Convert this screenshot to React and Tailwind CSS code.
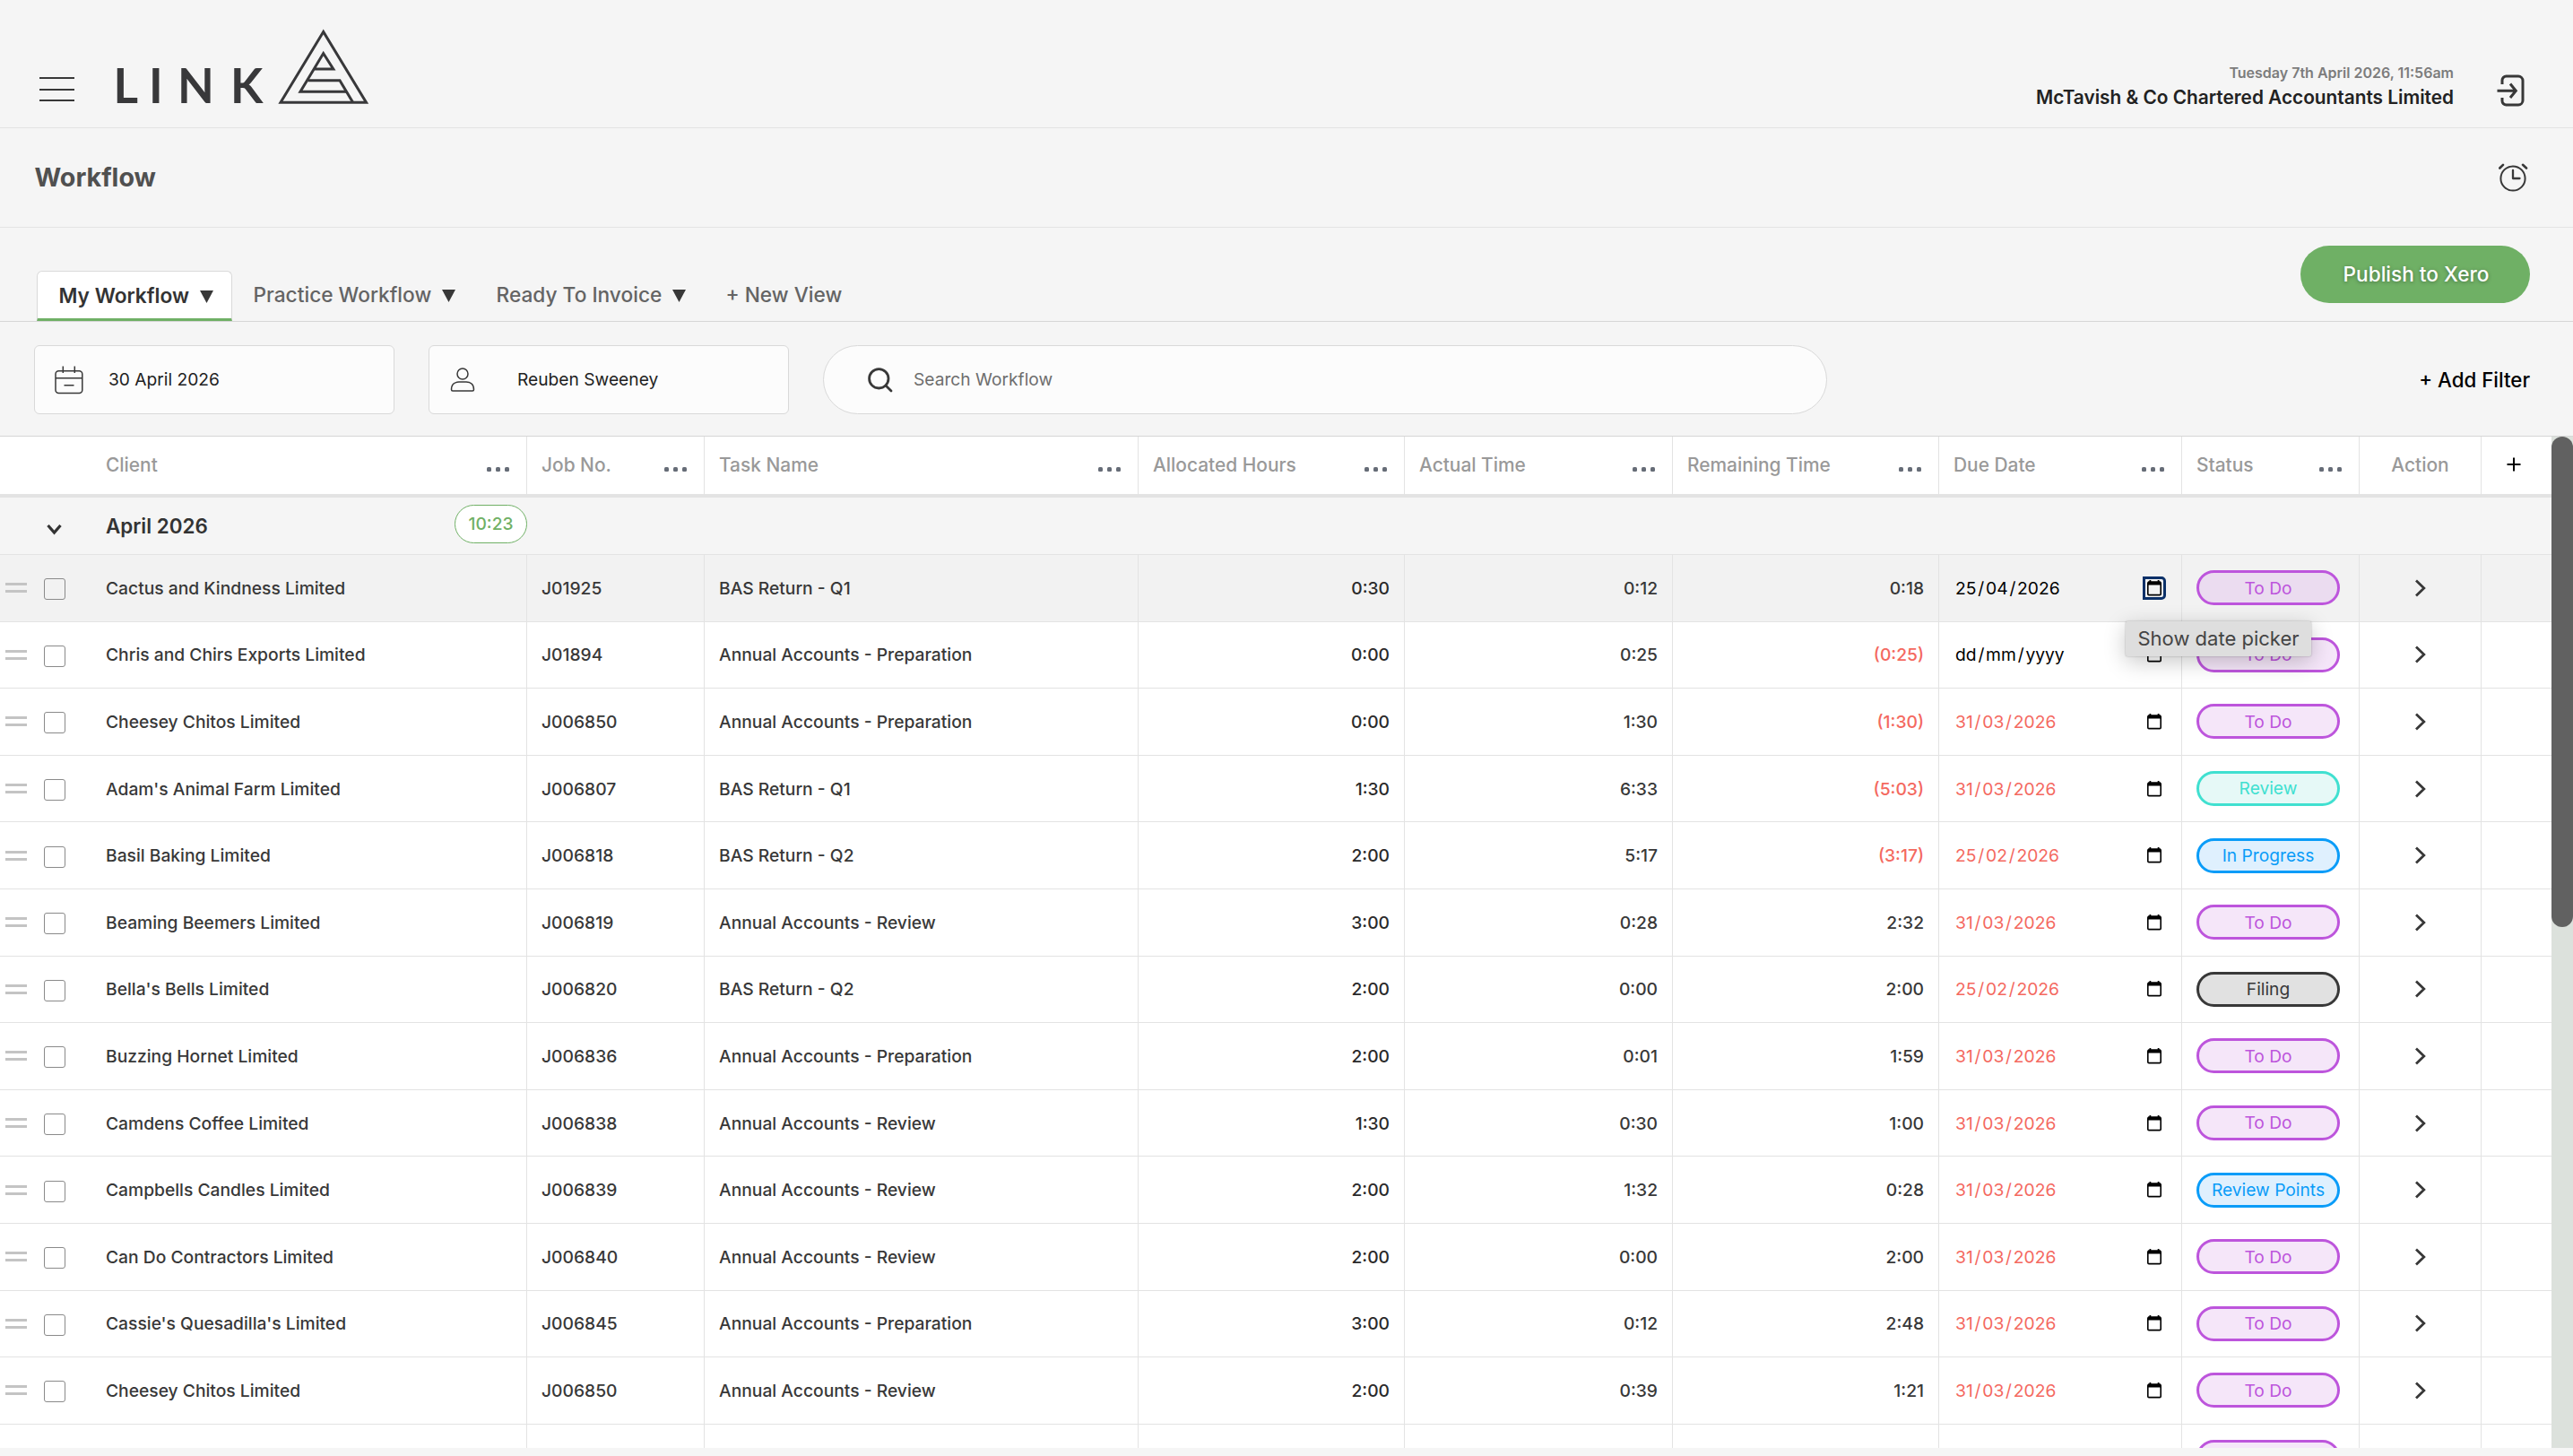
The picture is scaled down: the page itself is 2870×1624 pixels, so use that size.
import React from "react";

const GRID =
  "grid grid-cols-[588px_198px_484px_297px_299px_297px_271px_198px_136px_78px]";

const ROWS = [
  ["Cactus and Kindness Limited", "J01925", "BAS Return - Q1", "0:30", "0:12", "0:18", "25/04/2026", "To Do"],
  ["Chris and Chirs Exports Limited", "J01894", "Annual Accounts - Preparation", "0:00", "0:25", "(0:25)", "dd/mm/yyyy", "To Do"],
  ["Cheesey Chitos Limited", "J006850", "Annual Accounts - Preparation", "0:00", "1:30", "(1:30)", "31/03/2026", "To Do"],
  ["Adam's Animal Farm Limited", "J006807", "BAS Return - Q1", "1:30", "6:33", "(5:03)", "31/03/2026", "Review"],
  ["Basil Baking Limited", "J006818", "BAS Return - Q2", "2:00", "5:17", "(3:17)", "25/02/2026", "In Progress"],
  ["Beaming Beemers Limited", "J006819", "Annual Accounts - Review", "3:00", "0:28", "2:32", "31/03/2026", "To Do"],
  ["Bella's Bells Limited", "J006820", "BAS Return - Q2", "2:00", "0:00", "2:00", "25/02/2026", "Filing"],
  ["Buzzing Hornet Limited", "J006836", "Annual Accounts - Preparation", "2:00", "0:01", "1:59", "31/03/2026", "To Do"],
  ["Camdens Coffee Limited", "J006838", "Annual Accounts - Review", "1:30", "0:30", "1:00", "31/03/2026", "To Do"],
  ["Campbells Candles Limited", "J006839", "Annual Accounts - Review", "2:00", "1:32", "0:28", "31/03/2026", "Review Points"],
  ["Can Do Contractors Limited", "J006840", "Annual Accounts - Review", "2:00", "0:00", "2:00", "31/03/2026", "To Do"],
  ["Cassie's Quesadilla's Limited", "J006845", "Annual Accounts - Preparation", "3:00", "0:12", "2:48", "31/03/2026", "To Do"],
  ["Cheesey Chitos Limited", "J006850", "Annual Accounts - Review", "2:00", "0:39", "1:21", "31/03/2026", "To Do"],
];

const STATUS = {
  "To Do": "border-[#bd55dc] bg-[#f5e6f9] text-[#bd55dc]",
  Review: "border-[#40e0d0] bg-[#e6f9f7] text-[#40e0d0]",
  "In Progress": "border-[#0a9cf8] bg-[#dff0fe] text-[#0a9cf8]",
  "Review Points": "border-[#0a9cf8] bg-[#dff0fe] text-[#0a9cf8]",
  Filing: "border-[#383838] bg-[#e1e1e1] text-[#383838]",
};

function Logo() {
  return (
    <svg className="h-[100px] w-[300px]" viewBox="-10 0 300 100" fill="none">
      <text
        x="-1.5 38 70 129"
        y="85.3"
        fill="#38383a"
        fontFamily="Lato"
        fontWeight="700"
        fontSize="53"
      >
        LINK
      </text>
      <g stroke="#38383a" strokeWidth="3" strokeMiterlimit="10" transform="translate(-128 -30)">
        <path d="M360.7 35.5 L313 114.3 H408.5 Z" />
        <path d="M350.5 77 H371.8 L360.7 59.5 L335 102.2 H386" />
        <path d="M343.5 89.8 H379 L393.5 114" />
      </g>
    </svg>
  );
}

function LogoutIcon() {
  return (
    <svg className="h-[36px] w-[32px]" viewBox="0 0 32 36" fill="none" stroke="#383838" strokeWidth="3">
      <path d="M6 11 V6.5 A4.5 4.5 0 0 1 10.5 2 H24 A5 5 0 0 1 29 7 V29 A5 5 0 0 1 24 34 H10.5 A4.5 4.5 0 0 1 6 29.5 V26" />
      <path d="M0.5 18.3 H22 M15 10.5 L21.3 18.3 L15 26" />
    </svg>
  );
}

function AlarmIcon() {
  return (
    <svg className="h-[33px] w-[34px]" viewBox="0 0 34 33" fill="none" stroke="#383838" strokeLinecap="round">
      <circle cx="17" cy="17" r="13.6" strokeWidth="2" />
      <path d="M17 8 V17 H24.5" strokeWidth="2.3" strokeLinejoin="round" />
      <path d="M2.3 5.5 L6 1.8 M28 1.8 L32 5.5" strokeWidth="2.6" />
    </svg>
  );
}

function CalendarIcon() {
  return (
    <svg className="h-[32px] w-[32px]" viewBox="0 0 32 32" fill="none" stroke="#383838" strokeWidth="1.5">
      <rect x="1" y="5.8" width="29.8" height="24.8" rx="3.5" />
      <path d="M1 13.7 H30.8 M9.3 0.5 V8 M22.3 0.5 V8 M10.5 21.7 H21.5" />
    </svg>
  );
}

function PersonIcon() {
  return (
    <svg className="h-[28px] w-[28px]" viewBox="0 0 28 28" fill="none" stroke="#383838" strokeWidth="1.5">
      <circle cx="14" cy="7" r="6" />
      <path d="M1.5 24.5 C1.5 18 6 16 10 16 H18 C22 16 26.5 18 26.5 24.5 C26.5 25.5 26 26 25 26 H3 C2 26 1.5 25.5 1.5 24.5 Z" />
    </svg>
  );
}

function SearchIcon() {
  return (
    <svg className="h-[28px] w-[28px]" viewBox="0 0 28 28" fill="none" stroke="#383838" strokeWidth="2.8" strokeLinecap="round">
      <circle cx="12.3" cy="12.3" r="10.7" />
      <path d="M20 20 L26 26" />
    </svg>
  );
}

function DateIcon() {
  return (
    <svg className="h-[18px] w-[16px]" viewBox="0 0 16 18">
      <rect x="0.8" y="2.2" width="14.4" height="14.4" rx="1.2" fill="none" stroke="#000" strokeWidth="1.6" />
      <path d="M1 1.6 H15 V5.6 H1 Z M2.5 0 H4.3 V3 H2.500 Z M11.700 0 H13.500 V3 H11.700 Z" fill="#000" />
    </svg>
  );
}

function Dots() {
  return (
    <span className="mt-[8px] mr-[19.5px] flex gap-[5px]">
      <i className="h-[5px] w-[5px] rounded-[1.5px] bg-[#666c77]" />
      <i className="h-[5px] w-[5px] rounded-[1.5px] bg-[#666c77]" />
      <i className="h-[5px] w-[5px] rounded-[1.5px] bg-[#666c77]" />
    </span>
  );
}

function Head({ label, first }) {
  return (
    <div className={`flex items-center justify-between border-r border-[#e3e3e3] ${first ? "pl-[118px]" : "pl-[16px]"}`}>
      <span>{label}</span>
      <Dots />
    </div>
  );
}

function Tab({ label, className }) {
  return (
    <div className={`flex h-[56px] items-center ${className}`}>
      <span>{label}</span>
      <svg className="mt-[1px] ml-[12px] h-[14px] w-[15px]" viewBox="0 0 15 14">
        <path d="M0 0 H15 L7.5 14 Z" fill="#383838" />
      </svg>
    </div>
  );
}

function DateText({ value }) {
  const [d, m, y] = value.split("/");
  return (
    <span>
      {d}
      <span className="mx-[1.8px]">/</span>
      {m}
      <span className="mx-[1.8px]">/</span>
      {y}
    </span>
  );
}

function Pill({ status, hovered }) {
  return (
    <span
      className={`flex h-[39px] w-[160px] items-center justify-center rounded-full border-[3px] pt-[1px] text-[19.2px] leading-none font-normal ${
        hovered ? "border-[#bd55dc] bg-[#ebdcf0] text-[#bd55dc]" : STATUS[status]
      }`}
    >
      {status}
    </span>
  );
}

function Row({ row, index }) {
  const [client, job, task, allocated, actual, remaining, due, status] = row;
  const hovered = index === 0;
  const cell = "flex items-center border-r border-[#e3e3e3]";
  return (
    <div className={`${GRID} h-[74.6px] shrink-0 border-b border-[#e3e3e3] ${hovered ? "bg-[#f2f2f2]" : "bg-white"}`}>
      <div className={cell}>
        <span className="ml-[6px] flex w-[24px] flex-col gap-[5px]">
          <i className="h-[3px] bg-[#c4c4c4]" />
          <i className="h-[3px] bg-[#c4c4c4]" />
        </span>
        <span className="mt-[3px] ml-[19px] h-[24px] w-[24px] rounded-[3px] border border-[#8a8a8a]" />
        <span className="ml-[45px] pt-[1px]">{client}</span>
      </div>
      <div className={`${cell} pt-[1px] pl-[16px]`}>{job}</div>
      <div className={`${cell} pt-[1px] pl-[16px]`}>{task}</div>
      <div className={`${cell} justify-end pt-[1px] pr-[16px] text-[#2a2a2a]`}>{allocated}</div>
      <div className={`${cell} justify-end pt-[1px] pr-[16px]`}>{actual}</div>
      <div className={`${cell} justify-end pt-[1px] pr-[16px] ${remaining[0] === "(" ? "text-[#f4695f]" : ""}`}>{remaining}</div>
      <div className={`${cell} justify-between pl-[18px] font-normal ${index < 2 ? "text-black" : "text-[#f4695f]"}`}>
        <span className="pt-[1px]">
          <DateText value={due} />
        </span>
        {hovered ? (
          <span className="mr-[17px] flex h-[26px] w-[26px] items-center justify-center rounded-r-[5px] border-[3px] border-[#0b3068]">
            <DateIcon />
          </span>
        ) : (
          <span className="mr-[22px]">
            <DateIcon />
          </span>
        )}
      </div>
      <div className={`${cell} pl-[16px]`}>
        <Pill status={status} hovered={hovered} />
      </div>
      <div className={`${cell} justify-center`}>
        <svg className="h-[20px] w-[14px]" viewBox="0 0 14 20" fill="none" stroke="#383838" strokeWidth="2.8">
          <path d="M2 1.5 L10.8 10 L2 18.5" />
        </svg>
      </div>
      <div />
    </div>
  );
}

export default function App() {
  return (
    <div className="flex h-[1624px] w-[2870px] flex-col overflow-hidden bg-[#f5f5f5] font-['Inter',sans-serif] text-[#383838]">
      <header className="flex h-[143px] shrink-0 items-start justify-between border-b border-[#e3e3e3]">
        <div className="flex">
          <div className="mt-[86px] ml-[44px] flex h-[27px] w-[39px] flex-col justify-between">
            <i className="h-[2px] bg-[#383838]" />
            <i className="h-[2px] bg-[#383838]" />
            <i className="h-[2px] bg-[#383838]" />
          </div>
          <div className="mt-[30px] ml-[35px]">
            <Logo />
          </div>
        </div>
        <div className="flex pr-[53px]">
          <div className="flex flex-col items-end pt-[71px] font-semibold">
            <div className="text-[16px] leading-[20px] text-[#7c7c7c]">Tuesday 7th April 2026, 11:56am</div>
            <div className="mt-[5px] text-[20.8px] leading-[26px] text-[#222]">McTavish &amp; Co Chartered Accountants Limited</div>
          </div>
          <div className="mt-[83px] ml-[48px]">
            <LogoutIcon />
          </div>
        </div>
      </header>

      <div className="flex h-[111px] shrink-0 items-center justify-between border-b border-[#e3e3e3] pr-[50px] pl-[38.5px]">
        <h1 className="pt-[1px] text-[28.7px] leading-none font-bold text-[#505050]">Workflow</h1>
        <AlarmIcon />
      </div>

      <div className="flex h-[105px] shrink-0 justify-between border-b border-[#d6d6d6] pr-[48px] pl-[41px]">
        <nav className="flex items-end text-[22.7px] leading-none font-medium text-[#646464]">
          <Tab
            label="My Workflow"
            className="w-[218px] rounded-t-[6px] border border-b-[3px] border-[#d9d9d9] border-b-[#6fb065] bg-white pt-[2px] pl-[23.5px] font-semibold text-[#333]"
          />
          <Tab label="Practice Workflow" className="ml-[23.5px] w-[271px] pb-[1px]" />
          <Tab label="Ready To Invoice" className="w-[256px] pb-[1px]" />
          <div className="flex h-[56px] items-center pb-[1px]">+ New View</div>
        </nav>
        <button className="mt-[20px] h-[64px] w-[256px] rounded-full bg-[#6fb065] pl-[2px] text-[22.6px] font-medium text-white [text-shadow:0_1px_4px_rgba(0,0,0,0.35)]">
          Publish to Xero
        </button>
      </div>

      <div className="flex h-[127px] shrink-0 items-start pt-[26px] pr-[48px] pl-[38px] text-[19.2px]">
        <div className="flex h-[77px] w-[402px] items-center rounded-[6px] border border-[#d9d9d9] bg-[#fcfcfc] pl-[22px] text-[#222]">
          <CalendarIcon />
          <span className="ml-[28px]">30 April 2026</span>
        </div>
        <div className="ml-[38px] flex h-[77px] w-[402px] items-center rounded-[6px] border border-[#d9d9d9] bg-[#fcfcfc] pl-[23px] text-[#222]">
          <PersonIcon />
          <span className="ml-[47px]">Reuben Sweeney</span>
        </div>
        <div className="ml-[38px] flex h-[77px] w-[1120px] items-center rounded-full border border-[#d9d9d9] bg-[#fcfcfc] pl-[49px] text-[#6e6e6e]">
          <SearchIcon />
          <span className="ml-[23px]">Search Workflow</span>
        </div>
        <div className="ml-auto flex h-[77px] items-center pt-[1px] text-[22.3px] font-medium text-black">+ Add Filter</div>
      </div>

      <div className="flex h-[1129px] shrink-0 border-t border-[#d6d6d6] bg-white">
        <div className="relative flex h-[1128px] w-[2846px] flex-col overflow-hidden">
          <div className={`${GRID} h-[68px] shrink-0 border-b-4 border-[#e3e3e3] text-[20.9px] font-medium text-[#999]`}>
            <Head label="Client" first />
            <Head label="Job No." />
            <Head label="Task Name" />
            <Head label="Allocated Hours" />
            <Head label="Actual Time" />
            <Head label="Remaining Time" />
            <Head label="Due Date" />
            <Head label="Status" />
            <div className="flex items-center justify-center border-r border-[#e3e3e3]">Action</div>
            <div className="flex items-center pl-[27.5px]">
              <svg className="mb-[3px] h-[16px] w-[16px]" viewBox="0 0 16 16" stroke="#000" strokeWidth="2">
                <path d="M0.5 8 H15.5 M8 0.5 V15.5" />
              </svg>
            </div>
          </div>

          <div className="flex h-[64px] shrink-0 items-center border-b border-[#e3e3e3] bg-[#f5f5f5]">
            <svg className="mt-[8px] ml-[52px] h-[14px] w-[17px]" viewBox="0 0 17 14" fill="none" stroke="#333" strokeWidth="3.2">
              <path d="M1.5 2 L8.5 10 L15.5 2" />
            </svg>
            <span className="ml-[49px] w-[389px] text-[22.4px] font-semibold text-[#333]">April 2026</span>
            <span className="mb-[4px] flex h-[43px] w-[81px] items-center justify-center rounded-full border border-[#6fb065] bg-white text-[19.2px] font-medium text-[#6fb065]">
              10:23
            </span>
          </div>

          <div className="flex flex-col text-[19.25px] font-medium">
            {ROWS.map((row, i) => (
              <Row key={i} row={row} index={i} />
            ))}
            <div className={`${GRID} h-[74.6px] shrink-0`}>
              {[0, 1, 2, 3, 4, 5, 6].map((i) => (
                <div key={i} className="border-r border-[#e3e3e3]" />
              ))}
              <div className="border-r border-[#e3e3e3] pt-[17px] pl-[16px]">
                <span className="block h-[39px] w-[160px] rounded-full border-[3px] border-[#bd55dc] bg-[#f5e6f9]" />
              </div>
              <div className="border-r border-[#e3e3e3]" />
            </div>
          </div>

          <div className="absolute top-[206px] left-[2371px] flex h-[39px] w-[207px] items-center justify-center rounded-[2px] bg-[#dedede] text-[22px] whitespace-nowrap text-[#444] shadow-[0_0_2px_rgba(0,0,0,0.3),0_6px_24px_rgba(0,0,0,0.22)]">
            Show date picker
          </div>
        </div>
        <div className="h-[1128px] w-[24px] bg-[#dce1dc]">
          <div className="h-[547px] rounded-full bg-[#616161]" />
        </div>
      </div>
    </div>
  );
}
